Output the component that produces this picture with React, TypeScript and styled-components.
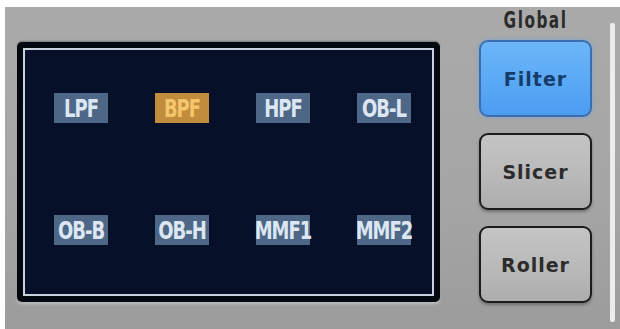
import React from "react";
import styled, { createGlobalStyle } from "styled-components";

const GlobalStyle = createGlobalStyle`
  html, body {
    margin: 0;
    padding: 0;
    background: #ffffff;
    width: 620px;
    height: 329px;
    overflow: hidden;
  }
`;

const filters = ["LPF", "BPF", "HPF", "OB-L", "OB-B", "OB-H", "MMF1", "MMF2"];
const modes = ["Filter", "Slicer", "Roller"];

const Panel = styled.div`
  margin: 7px 0 0 5px;
  height: 322px;
  display: flex;
  align-items: flex-start;
  padding-left: 12px;
  box-sizing: border-box;
  background: linear-gradient(180deg, #aaaaaa 0%, #a5a5a5 60%, #9c9c9c 100%);
`;

const Screen = styled.div`
  margin-top: 35px;
  width: 423px;
  height: 260px;
  box-sizing: border-box;
  background: #03070f;
  border-radius: 5px;
  padding: 6px;
  box-shadow: 0 2px 3px rgba(255, 255, 255, 0.35), 0 -1px 2px rgba(0, 0, 0, 0.3);
`;

const ScreenInner = styled.div`
  height: 100%;
  box-sizing: border-box;
  border: 2px solid #c9d1de;
  background: #061029;
  display: grid;
  grid-template-columns: repeat(4, 54px);
  grid-auto-rows: 30px;
  column-gap: 47px;
  row-gap: 92px;
  padding: 43px 0 0 29px;
`;

const Tag = styled.div<{ active?: boolean }>`
  display: flex;
  align-items: center;
  justify-content: center;
  background: ${({ active }) => (active ? "#c18c3c" : "#4f6787")};
  color: ${({ active }) => (active ? "#f3c56c" : "#dde7f3")};
  font-family: "DejaVu Sans Condensed", "DejaVu Sans", sans-serif;
  font-weight: bold;
  font-size: 20px;
  letter-spacing: -1px;
`;

const TagText = styled.span`
  display: inline-block;
  transform: scaleY(1.25);
`;

const Side = styled.div`
  margin-left: 39px;
  width: 113px;
  display: flex;
  flex-direction: column;
  align-items: stretch;
`;

const SideTitle = styled.div`
  height: 33px;
  padding-top: 4px;
  box-sizing: border-box;
  text-align: center;
  font-family: "DejaVu Sans Condensed", "DejaVu Sans", sans-serif;
  font-weight: bold;
  font-size: 17px;
  letter-spacing: 1.5px;
  color: #2b2b2b;
  transform: scaleY(1.3);
`;

const ModeList = styled.div`
  display: flex;
  flex-direction: column;
  gap: 16px;
`;

const ModeButton = styled.div<{ active?: boolean }>`
  height: 77px;
  box-sizing: border-box;
  border-radius: 9px;
  border: 2px solid ${({ active }) => (active ? "#3a6eae" : "#1c1c1c")};
  background: ${({ active }) =>
    active
      ? "linear-gradient(180deg, #6cb6f7 0%, #5aa9f6 55%, #4b9cf0 100%)"
      : "linear-gradient(180deg, #c4c4c4 0%, #b8b8b8 60%, #adadad 100%)"};
  box-shadow: ${({ active }) =>
    active
      ? "0 0 4px rgba(90, 160, 240, 0.6)"
      : "0 2px 3px rgba(0, 0, 0, 0.3)"};
  display: flex;
  align-items: center;
  justify-content: center;
  font-family: "DejaVu Sans", sans-serif;
  font-weight: bold;
  font-size: 19px;
  letter-spacing: 1px;
  color: ${({ active }) => (active ? "#163c6a" : "#2c2c2c")};
`;

const Strip = styled.div`
  margin: 16px 0 0 18px;
  width: 5px;
  height: 299px;
  background: #ececec;
  border-radius: 2px;
`;

export default function App() {
  return (
    <>
      <GlobalStyle />
      <Panel>
        <Screen>
          <ScreenInner>
            {filters.map((f) => (
              <Tag key={f} active={f === "BPF"}>
                <TagText>{f}</TagText>
              </Tag>
            ))}
          </ScreenInner>
        </Screen>
        <Side>
          <SideTitle>Global</SideTitle>
          <ModeList>
            {modes.map((m) => (
              <ModeButton key={m} active={m === "Filter"}>
                {m}
              </ModeButton>
            ))}
          </ModeList>
        </Side>
        <Strip />
      </Panel>
    </>
  );
}
